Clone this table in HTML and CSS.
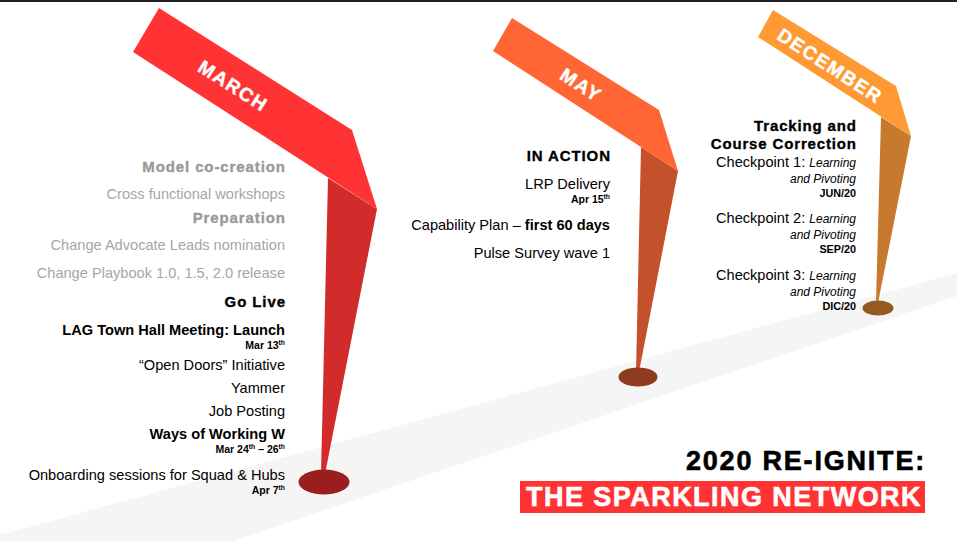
FILE: index.html
```html
<!DOCTYPE html>
<html lang="en">
<head>
<meta charset="utf-8">
<title>2020 Re-Ignite: The Sparkling Network</title>
<link rel="stylesheet" href="styles.css">
</head>
<body>
<div class="slide">
  <svg class="art" width="957" height="541" viewBox="0 0 957 541" xmlns="http://www.w3.org/2000/svg">
    <rect x="0" y="0" width="957" height="2" fill="#222222"/>
    <polygon points="0,535 957,273 957,296 233,541 0,541" fill="#f5f5f5"/>
    <!-- March -->
    <polygon points="328,178 377,209 325,474 321,474" fill="#d22b2b"/>
    <polygon points="159,8 352,130 377,209 133,52" fill="#ff3333"/>
    <ellipse cx="324" cy="482" rx="25.5" ry="12.5" fill="#9b1e1e"/>
    <text class="lbl" x="0" y="0" transform="translate(233,86) rotate(32.5)">MARCH</text>
    <!-- May -->
    <polygon points="641,147 678,171 639,372 636,372" fill="#c4512b"/>
    <polygon points="512,18 659,110 678,171 493,51" fill="#ff6633"/>
    <ellipse cx="638" cy="377" rx="19.5" ry="9.5" fill="#8f3b20"/>
    <text class="lbl" x="0" y="0" transform="translate(581,85) rotate(33)">MAY</text>
    <!-- December -->
    <polygon points="881,117 911,136 878,303 876,303" fill="#c77a2d"/>
    <polygon points="773,10 896,86 911,136 758,37" fill="#ff9933"/>
    <ellipse cx="878" cy="308" rx="15.5" ry="7.5" fill="#935b22"/>
    <text class="lbl" x="0" y="0" transform="translate(830,66) rotate(33)">DECEMBER</text>
  </svg>

  <div class="col col-march">
    <p class="hd muted">Model co-creation</p>
    <p class="ln muted-lt sp5">Cross functional workshops</p>
    <p class="hd muted">Preparation</p>
    <p class="ln muted-lt sp5">Change Advocate Leads nomination</p>
    <p class="ln muted-lt sp5">Change Playbook 1.0, 1.5, 2.0 release</p>
    <p class="hd sp5">Go Live</p>
    <p class="ln b sp6">LAG Town Hall Meeting: Launch</p>
    <p class="date">Mar 13<sup>th</sup></p>
    <p class="ln sp2">“Open Doors” Initiative</p>
    <p class="ln">Yammer</p>
    <p class="ln">Job Posting</p>
    <p class="ln b">Ways of Working W</p>
    <p class="date">Mar 24<sup>th</sup> – 26<sup>th</sup></p>
    <p class="ln sp8">Onboarding sessions for Squad &amp; Hubs</p>
    <p class="date">Apr 7<sup>th</sup></p>
  </div>

  <div class="col col-may">
    <p class="hd">IN ACTION</p>
    <p class="ln sp6">LRP Delivery</p>
    <p class="date">Apr 15<sup>th</sup></p>
    <p class="ln sp8">Capability Plan – <b>first 60 days</b></p>
    <p class="ln sp5">Pulse Survey wave 1</p>
  </div>

  <div class="col col-dec">
    <p class="hd2">Tracking and</p>
    <p class="hd2">Course Correction</p>
    <div class="cp">
      <p class="cp-line">Checkpoint 1: <em>Learning</em></p>
      <p class="piv">and Pivoting</p>
      <p class="code">JUN/20</p>
    </div>
    <div class="cp cp-2">
      <p class="cp-line">Checkpoint 2: <em>Learning</em></p>
      <p class="piv">and Pivoting</p>
      <p class="code">SEP/20</p>
    </div>
    <div class="cp cp-3">
      <p class="cp-line">Checkpoint 3: <em>Learning</em></p>
      <p class="piv">and Pivoting</p>
      <p class="code">DIC/20</p>
    </div>
  </div>

  <div class="title">
    <p class="title-1">2020 RE-IGNITE:</p>
    <p class="title-2">THE SPARKLING NETWORK</p>
  </div>
</div>
</body>
</html>
```

FILE: styles.css
```css
* {
  margin: 0;
  padding: 0;
  box-sizing: border-box;
}

body {
  margin: 0;
  background: #ffffff;
  font-family: "Liberation Sans", Arial, sans-serif;
  color: #000000;
}

.slide {
  width: 957px;
  height: 541px;
  display: grid;
  grid-template-columns: 285px 325px 246px 101px;
  grid-template-rows: 541px;
  overflow: hidden;
}

.art {
  grid-row: 1;
  grid-column: 1 / -1;
  display: block;
}

.lbl {
  font-family: "Liberation Sans", Arial, sans-serif;
  font-weight: 700;
  font-size: 19px;
  letter-spacing: 1.5px;
  fill: #ffffff;
  stroke: #ffffff;
  stroke-width: 0.4px;
  text-anchor: middle;
  dominant-baseline: central;
}

.col {
  grid-row: 1;
  text-align: right;
}

.col-march {
  grid-column: 1;
  padding-top: 155px;
}

.col-may {
  grid-column: 2;
  padding-top: 144px;
}

.col-dec {
  grid-column: 3;
  padding-top: 116.5px;
}

.ln {
  font-size: 14.6px;
  line-height: 23px;
}

.hd {
  font-size: 15px;
  line-height: 23px;
  font-weight: 700;
  letter-spacing: 0.9px;
  margin-right: -0.9px;
  -webkit-text-stroke: 0.35px currentColor;
}

.b {
  font-weight: 700;
}

.muted {
  color: #999999;
}

.muted-lt {
  color: #a6a6a6;
}

.date {
  font-size: 10.5px;
  line-height: 13px;
  font-weight: 700;
  margin-top: -3px;
}

.date sup {
  font-size: 6.8px;
  line-height: 0;
  vertical-align: 4px;
}

.sp2 { margin-top: 2px; }
.sp5 { margin-top: 5px; }
.sp6 { margin-top: 6px; }
.sp8 { margin-top: 8px; }

.hd2 {
  font-size: 15px;
  line-height: 18px;
  font-weight: 700;
  letter-spacing: 0.85px;
  margin-right: -0.85px;
  -webkit-text-stroke: 0.35px currentColor;
}

.cp-line {
  font-size: 14.6px;
  line-height: 18px;
}

.cp-line em {
  font-size: 12px;
}

.piv {
  font-size: 12px;
  line-height: 15px;
  font-style: italic;
}

.code {
  font-size: 10.8px;
  line-height: 12px;
  font-weight: 700;
}

.cp-2 { margin-top: 10px; }
.cp-3 { margin-top: 11px; }

.title {
  grid-row: 1;
  grid-column: 1 / -1;
  align-self: end;
  justify-self: end;
  margin: 0 32px 28px 0;
  display: flex;
  flex-direction: column;
  align-items: flex-end;
}

.title-1 {
  font-size: 27px;
  line-height: 30px;
  font-weight: 700;
  letter-spacing: 1.8px;
  margin-right: -1px;
  -webkit-text-stroke: 0.6px currentColor;
}

.title-2 {
  margin-top: 5.4px;
  height: 32px;
  font-size: 27px;
  line-height: 32px;
  font-weight: 700;
  letter-spacing: 1.45px;
  padding: 0 3px 0 6px;
  background: #ff3333;
  color: #ffffff;
  -webkit-text-stroke: 0.6px currentColor;
}
```
